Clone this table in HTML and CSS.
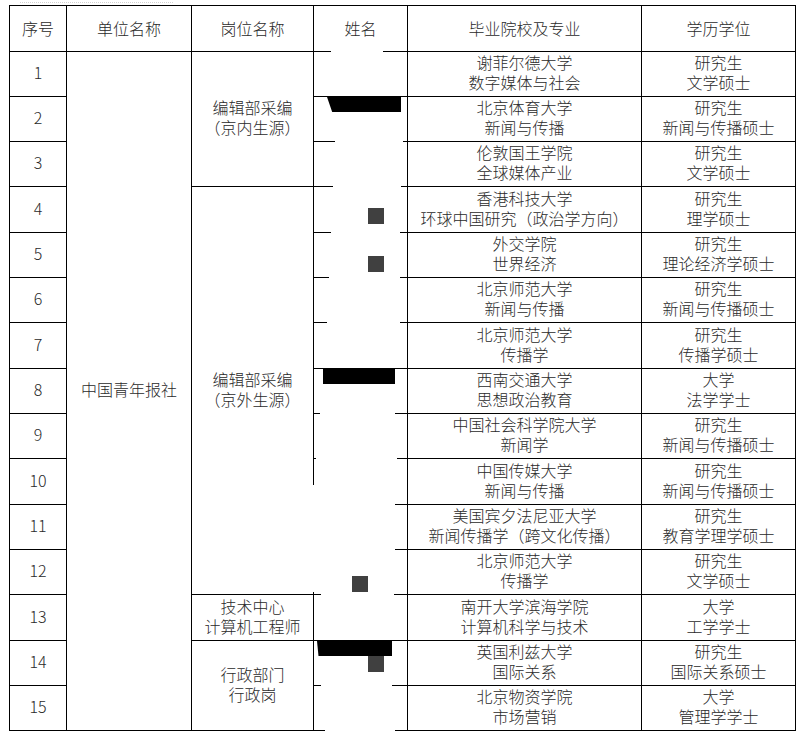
FILE: index.html
```html
<!DOCTYPE html>
<html lang="zh">
<head>
<meta charset="utf-8">
<title>拟录用人员名单</title>
<link rel="stylesheet" href="styles.css">
</head>
<body>
<div class="sheet">
  <div class="title"></div>
  <table class="grid">
    <colgroup>
      <col class="c-no"><col class="c-unit"><col class="c-post"><col class="c-name"><col class="c-school"><col class="c-degree">
    </colgroup>
    <thead>
      <tr class="head">
        <th>序号</th><th>单位名称</th><th>岗位名称</th><th>姓名</th><th>毕业院校及专业</th><th>学历学位</th>
      </tr>
    </thead>
    <tbody>
      <tr>
        <td>1</td>
        <td rowspan="15">中国青年报社</td>
        <td rowspan="3">编辑部采编<br>（京内生源）</td>
        <td class="nm"></td>
        <td>谢菲尔德大学<br>数字媒体与社会</td>
        <td>研究生<br>文学硕士</td>
      </tr>
      <tr>
        <td>2</td><td class="nm"></td>
        <td>北京体育大学<br>新闻与传播</td>
        <td>研究生<br>新闻与传播硕士</td>
      </tr>
      <tr>
        <td>3</td><td class="nm"></td>
        <td>伦敦国王学院<br>全球媒体产业</td>
        <td>研究生<br>文学硕士</td>
      </tr>
      <tr class="tall">
        <td>4</td>
        <td rowspan="9">编辑部采编<br>（京外生源）</td>
        <td class="nm"></td>
        <td>香港科技大学<br>环球中国研究（政治学方向）</td>
        <td>研究生<br>理学硕士</td>
      </tr>
      <tr>
        <td>5</td><td class="nm"></td>
        <td>外交学院<br>世界经济</td>
        <td>研究生<br>理论经济学硕士</td>
      </tr>
      <tr>
        <td>6</td><td class="nm"></td>
        <td>北京师范大学<br>新闻与传播</td>
        <td>研究生<br>新闻与传播硕士</td>
      </tr>
      <tr class="tall">
        <td>7</td><td class="nm"></td>
        <td>北京师范大学<br>传播学</td>
        <td>研究生<br>传播学硕士</td>
      </tr>
      <tr>
        <td>8</td><td class="nm"></td>
        <td>西南交通大学<br>思想政治教育</td>
        <td>大学<br>法学学士</td>
      </tr>
      <tr>
        <td>9</td><td class="nm"></td>
        <td>中国社会科学院大学<br>新闻学</td>
        <td>研究生<br>新闻与传播硕士</td>
      </tr>
      <tr class="tall">
        <td>10</td><td class="nm"></td>
        <td>中国传媒大学<br>新闻与传播</td>
        <td>研究生<br>新闻与传播硕士</td>
      </tr>
      <tr>
        <td>11</td><td class="nm"></td>
        <td>美国宾夕法尼亚大学<br>新闻传播学（跨文化传播）</td>
        <td>研究生<br>教育学理学硕士</td>
      </tr>
      <tr>
        <td>12</td><td class="nm"></td>
        <td>北京师范大学<br>传播学</td>
        <td>研究生<br>文学硕士</td>
      </tr>
      <tr class="tall">
        <td>13</td>
        <td>技术中心<br>计算机工程师</td>
        <td class="nm"></td>
        <td>南开大学滨海学院<br>计算机科学与技术</td>
        <td>大学<br>工学学士</td>
      </tr>
      <tr>
        <td>14</td>
        <td rowspan="2">行政部门<br>行政岗</td>
        <td class="nm"></td>
        <td>英国利兹大学<br>国际关系</td>
        <td>研究生<br>国际关系硕士</td>
      </tr>
      <tr>
        <td>15</td><td class="nm"></td>
        <td>北京物资学院<br>市场营销</td>
        <td>大学<br>管理学学士</td>
      </tr>
    </tbody>
  </table>

  <div class="redact" aria-hidden="true">
    <i class="gap g51"></i>
    <i class="gap g141"></i>
    <i class="gap g186"></i>
    <i class="gap g232"></i>
    <i class="gap g277"></i>
    <i class="gap g322"></i>
    <i class="gap g413"></i>
    <i class="gap g458"></i>
    <i class="gap g504"></i>
    <i class="gap g549"></i>
    <i class="gap g594"></i>
    <i class="gap g685"></i>
    <i class="gap g730"></i>
    <i class="vgap"></i>
    <i class="bar b2"></i>
    <i class="bar b8"></i>
    <i class="bar b14"></i>
    <i class="sq s4"></i>
    <i class="sq s5"></i>
    <i class="sq s12"></i>
    <i class="sq s14"></i>
  </div>
</div>
</body>
</html>
```

FILE: styles.css
```css
html, body {
  margin: 0;
  padding: 0;
  background: #ffffff;
}

body {
  font-family: "Noto Sans CJK SC", "Noto Sans", sans-serif;
  color: #2a2a2a;
}

.sheet {
  position: relative;
  width: 803px;
  height: 735px;
  overflow: hidden;
}

.title {
  height: 5px;
  margin: 0 630px 0 20px;
  border-bottom: 1px dotted #d4d4d4;
  box-sizing: border-box;
  height: 3px;
  margin-bottom: 2px;
}

.grid {
  margin-left: 9px;
  border-collapse: collapse;
  table-layout: fixed;
  width: 786px;
}

.c-no { width: 57px; }
.c-unit { width: 125px; }
.c-post { width: 122px; }
.c-name { width: 94px; }
.c-school { width: 234px; }
.c-degree { width: 154px; }

.grid th,
.grid td {
  border: 1px solid #000;
  padding: 0 0 4px 0;
  text-align: center;
  vertical-align: middle;
  font-size: 16px;
  font-weight: 300;
  line-height: 20px;
  white-space: nowrap;
}

.grid th {
  font-weight: 300;
  padding-bottom: 2px;
}

.grid tr { height: 45px; }
.grid tr.head { height: 46px; }
.grid tr.tall { height: 46px; }

.grid td.nm { background: #fff; }

/* redaction overlay drawn on top of the name column */
.redact {
  position: absolute;
  left: 0;
  top: 0;
  width: 803px;
  height: 735px;
  pointer-events: none;
}

.redact i {
  position: absolute;
  display: block;
}

.gap {
  height: 3px;
  background: #fff;
}

.g51 { top: 49px; left: 331px; width: 52px; }
.g141 { top: 140px; left: 335px; width: 68px; }
.g186 { top: 185px; left: 333px; width: 68px; }
.g232 { top: 231px; left: 331px; width: 69px; }
.g277 { top: 276px; left: 329px; width: 71px; }
.g322 { top: 321px; left: 327px; width: 73px; }
.g413 { top: 411px; left: 320px; width: 75px; }
.g458 { top: 457px; left: 316px; width: 81px; }
.g504 { top: 502px; left: 314px; width: 81px; }
.g549 { top: 548px; left: 314px; width: 81px; }
.g594 { top: 593px; left: 321px; width: 73px; }
.g685 { top: 684px; left: 321px; width: 71px; }
.g730 { top: 729px; left: 325px; width: 70px; }

.vgap {
  left: 311px;
  top: 485px;
  width: 4px;
  height: 107px;
  background: #fff;
}

.bar {
  background: #000;
}

.b2 {
  left: 327px;
  top: 97px;
  width: 74px;
  height: 15px;
  clip-path: polygon(0 0, 100% 0, 100% 100%, 7% 100%);
}

.b8 {
  left: 323px;
  top: 369px;
  width: 72px;
  height: 15px;
}

.b14 {
  left: 317px;
  top: 641px;
  width: 75px;
  height: 15px;
  clip-path: polygon(0 0, 100% 0, 100% 100%, 2% 100%);
}

.sq {
  width: 16px;
  height: 16px;
  background: #404040;
}

.s4 { left: 368px; top: 208px; }
.s5 { left: 368px; top: 256px; }
.s12 { left: 352px; top: 576px; }
.s14 { left: 368px; top: 656px; }
```
